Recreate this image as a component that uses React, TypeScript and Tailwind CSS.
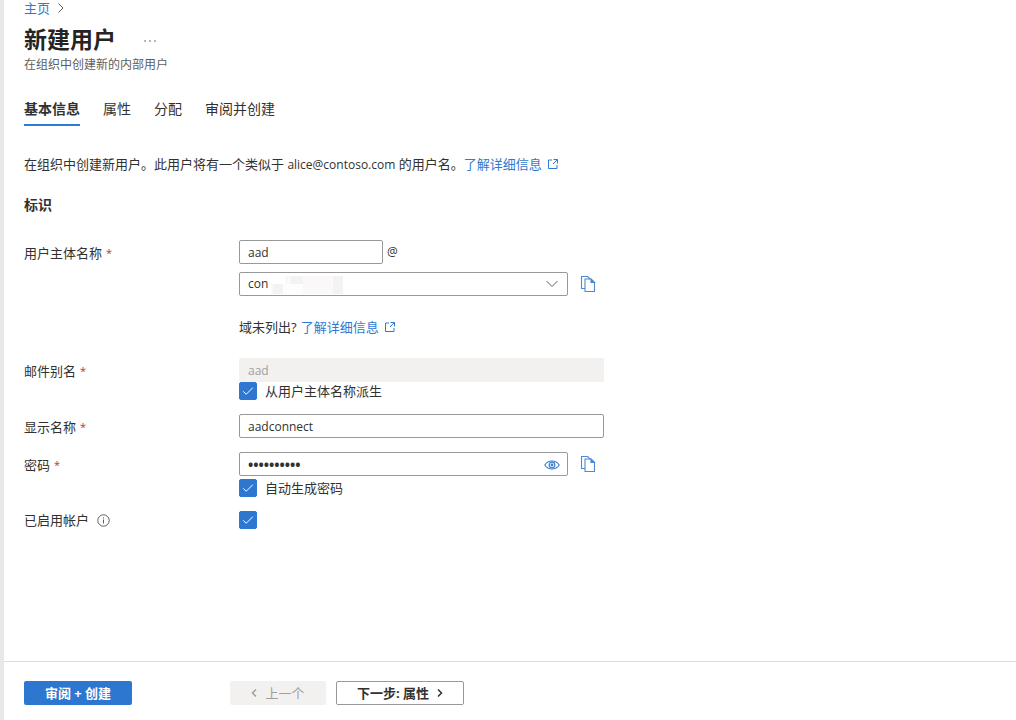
import { useState } from 'react';
import type { InputHTMLAttributes, ReactNode } from 'react';
import clsx from 'clsx';

const tabs = ['基本信息', '属性', '分配', '审阅并创建'];

const inputClass = 'h-6 rounded-xs border border-[#999999] bg-white px-2 text-[#323130]';

function CopyIcon() {
  return (
    <svg width="16" height="18" viewBox="0 0 16 18" fill="none" stroke="#4a8ad6" strokeWidth="1.1">
      <path d="M5 13.5H1.5v-12h6L10 4" />
      <path d="M5 4h6l3.5 3.500v9H5z" />
      <path d="M11 4v3.500h3.500z" fill="#4a8ad6" />
    </svg>
  );
}

function ExternalLink({ children }: { children: ReactNode }) {
  return (
    <a href="#" className="inline-flex items-center gap-1.5 text-[#3079d0]">
      {children}
      <svg width="10" height="10" viewBox="0 0 10 10" fill="none" stroke="currentColor">
        <path d="M4 1H.5v8.500H9V6M5.500.5h4v4M9.500.5 5 5" />
      </svg>
    </a>
  );
}

function Checkbox(props: InputHTMLAttributes<HTMLInputElement>) {
  return (
    <span className="relative block h-[18px] w-[18px] shrink-0">
      <input
        {...props}
        type="checkbox"
        className="peer block h-[18px] w-[18px] appearance-none rounded-xs border border-[#999999] checked:border-[#2e77d0] checked:bg-[#2e77d0]"
      />
      <svg
        className="pointer-events-none absolute inset-0 hidden peer-checked:block"
        width="18"
        height="18"
        viewBox="0 0 18 18"
        fill="none"
        stroke="#fff"
      >
        <path d="m4.2 9.3 3 3 6.6-6.6" />
      </svg>
    </span>
  );
}

function Label({ htmlFor, required, children }: { htmlFor: string; required?: boolean; children: ReactNode }) {
  return (
    <label htmlFor={htmlFor} className="flex h-[26px] w-[215px] shrink-0 items-center gap-1">
      {children}
      {required && <span className="text-[11px] text-[#b3373b]">*</span>}
    </label>
  );
}

export default function App() {
  const [activeTab, setActiveTab] = useState(tabs[0]);
  const [userName, setUserName] = useState('aad');
  const [displayName, setDisplayName] = useState('aadconnect');
  const [password, setPassword] = useState('aaaaaaaaaa');
  const [showPassword, setShowPassword] = useState(false);

  return (
    <div className="flex min-h-screen flex-col border-l-4 border-[#e8e8e8] bg-white font-['Open_Sans','Noto_Sans_CJK_SC',sans-serif] text-[13px] leading-5 text-[#323130]">
      <main className="flex-1 px-5">
        {/* Header */}
        <nav className="flex h-4 items-center gap-2 leading-4">
          <a href="#" className="text-[#3079d0]">主页</a>
          <svg width="6" height="10" viewBox="0 0 6 10" fill="none" stroke="#605e5c">
            <path d="m.5.5 4.5 4.5-4.5 4.5" />
          </svg>
        </nav>
        <div className="mt-[7px] flex h-8 items-center gap-7">
          <h1 className="text-[23px] leading-8 font-bold text-[#252423]">新建用户</h1>
          <button type="button" aria-label="更多" className="pt-1">
            <svg width="12" height="2" viewBox="0 0 12 2" fill="#605e5c">
              <circle cx="1" cy="1" r=".8" />
              <circle cx="6" cy="1" r=".8" />
              <circle cx="11" cy="1" r=".8" />
            </svg>
          </button>
        </div>
        <p className="mt-0.5 text-[12px] leading-4 text-[#605e5c]">在组织中创建新的内部用户</p>

        {/* Tabs */}
        <div role="tablist" className="mt-6 flex gap-[23px] text-[14px]">
          {tabs.map(tab => (
            <button
              key={tab}
              type="button"
              role="tab"
              aria-selected={tab === activeTab}
              onClick={() => setActiveTab(tab)}
              className={clsx(
                'h-[29px] border-b-2 pb-1',
                tab === activeTab ? 'border-[#2e7bd6] font-bold' : 'border-transparent'
              )}
            >
              {tab}
            </button>
          ))}
        </div>

        <p className="mt-7 flex items-baseline">
          <span>
            在组织中创建新用户。此用户将有一个类似于 <span className="text-[12px]">alice@contoso.com</span> 的用户名。
          </span>
          <ExternalLink>了解详细信息</ExternalLink>
        </p>
        <h2 className="mt-5 text-[14px] font-bold">标识</h2>

        {/* User principal name */}
        <div className="mt-[25px] flex">
          <Label htmlFor="upn" required>用户主体名称</Label>
          <div>
            <div className="flex items-center gap-1">
              <input
                id="upn"
                value={userName}
                onChange={e => setUserName(e.target.value)}
                className={clsx(inputClass, 'w-36 text-[12px]')}
              />
              <span className="text-[12px]">@</span>
            </div>
            <div className="mt-2 flex items-center gap-3">
              <div className="relative">
                <select aria-label="域" className={clsx(inputClass, 'block w-[329px] appearance-none text-[12px]')}>
                  <option>con</option>
                </select>
                {/* Masked part of the domain */}
                <svg className="pointer-events-none absolute top-1 left-8" width="72" height="18" viewBox="0 0 72 18">
                  <path fill="#faf8f8" d="M0 8h72v10H0zM14 0h48v8H14z" />
                  <path fill="#f4f3f3" d="M20 0h12v8H20zM2 8h10v10H2zM62 0h10v18H62z" />
                  <path fill="#fdfdfd" d="M12 8h20v10H12z" />
                </svg>
                <svg
                  className="pointer-events-none absolute top-2 right-2.5"
                  width="12"
                  height="8"
                  viewBox="0 0 12 8"
                  fill="none"
                  stroke="#605e5c"
                >
                  <path d="m.5 1 5.5 5.5L11.5 1" />
                </svg>
              </div>
              <button type="button" aria-label="复制用户主体名称">
                <CopyIcon />
              </button>
            </div>
            <p className="mt-[21px] flex gap-1">
              域未列出?
              <ExternalLink>了解详细信息</ExternalLink>
            </p>
          </div>
        </div>

        {/* Mail nickname */}
        <div className="mt-[21px] flex">
          <Label htmlFor="nickname" required>邮件别名</Label>
          <div>
            <input
              id="nickname"
              disabled
              value={userName}
              readOnly
              className="block h-6 w-[365px] rounded-xs border border-[#f2f1f0] bg-[#f2f1f0] px-2 text-[12px] text-[#a19f9d]"
            />
            <label className="flex h-[18px] items-center gap-2">
              <Checkbox defaultChecked />
              从用户主体名称派生
            </label>
          </div>
        </div>

        {/* Display name */}
        <div className="mt-3.5 flex">
          <Label htmlFor="displayName" required>显示名称</Label>
          <input
            id="displayName"
            value={displayName}
            onChange={e => setDisplayName(e.target.value)}
            className={clsx(inputClass, 'w-[365px] text-[12px]')}
          />
        </div>

        {/* Password */}
        <div className="mt-3 flex">
          <Label htmlFor="password" required>密码</Label>
          <div>
            <div className="flex items-center gap-3">
              <div className="relative">
                <input
                  id="password"
                  type={showPassword ? 'text' : 'password'}
                  value={password}
                  onChange={e => setPassword(e.target.value)}
                  className={clsx(inputClass, 'block w-[329px] text-[14px] font-bold')}
                />
                <button
                  type="button"
                  aria-label="显示密码"
                  onClick={() => setShowPassword(!showPassword)}
                  className="absolute top-2 right-2"
                >
                  <svg width="16" height="10" viewBox="0 0 16 10" fill="none" stroke="#3a80d2" strokeWidth="1.2">
                    <path d="M.8 5C2.5 2.3 5 1 8 1s5.500 1.300 7.200 4C13.500 7.700 11 9 8 9S2.500 7.700.8 5z" />
                    <circle cx="8" cy="5" r="2.800" />
                    <circle cx="8" cy="5" r=".8" fill="#3a80d2" />
                  </svg>
                </button>
              </div>
              <button type="button" aria-label="复制密码">
                <CopyIcon />
              </button>
            </div>
            <label className="mt-[3px] flex h-[18px] items-center gap-2">
              <Checkbox defaultChecked />
              自动生成密码
            </label>
          </div>
        </div>

        {/* Account enabled */}
        <div className="mt-2.5 flex items-center">
          <Label htmlFor="enabled">
            已启用帐户
            <svg className="ml-1" width="13" height="13" viewBox="0 0 13 13" fill="none" stroke="#605e5c">
              <circle cx="6.500" cy="6.500" r="5.700" />
              <path d="M6.500 5.500v4M6.500 3.300v1.200" />
            </svg>
          </Label>
          <Checkbox id="enabled" defaultChecked />
        </div>
      </main>

      {/* Footer */}
      <footer className="flex border-t border-[#dcdcdc] px-5 pt-[19px] pb-[15px] font-bold">
        <button type="button" className="h-6 w-[108px] rounded-xs bg-[#2e77d0] text-white">
          审阅 + 创建
        </button>
        <button
          type="button"
          disabled
          className="ml-[98px] flex h-6 w-24 items-center justify-center gap-2 rounded-xs bg-[#f2f1f0] font-normal text-[#a19f9d]"
        >
          <svg width="6" height="8" viewBox="0 0 6 8" fill="none" stroke="currentColor" strokeWidth="1.5">
            <path d="M5 .5 1.500 4 5 7.500" />
          </svg>
          上一个
        </button>
        <button
          type="button"
          className="ml-2.5 flex h-6 w-32 items-center justify-center gap-2 rounded-xs border border-[#999999]"
        >
          下一步: 属性
          <svg width="6" height="8" viewBox="0 0 6 8" fill="none" stroke="currentColor" strokeWidth="1.5">
            <path d="M1 .5 4.500 4 1 7.500" />
          </svg>
        </button>
      </footer>
    </div>
  );
}
